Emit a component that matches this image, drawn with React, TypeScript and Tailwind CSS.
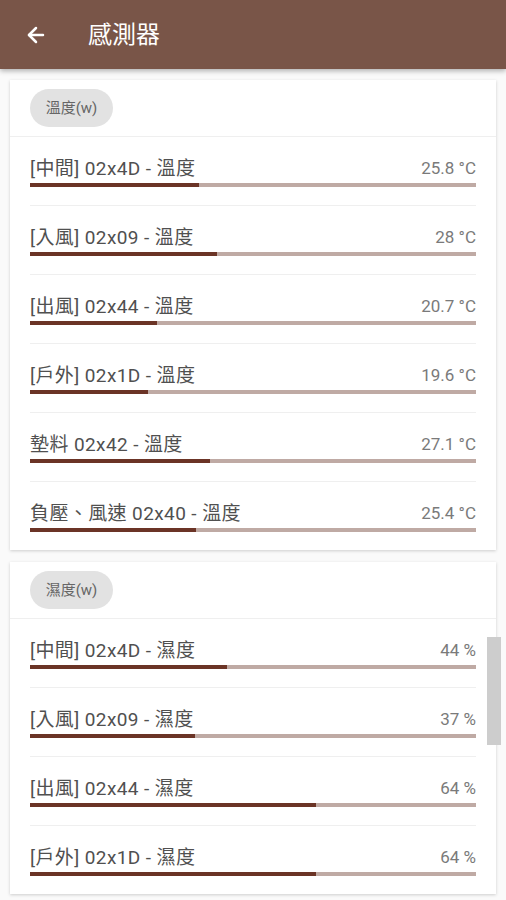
import { ArrowLeft } from "lucide-react";

interface Reading {
  name: string;
  value: string;
  fill: number; // px of the 447px track
}

const temps: Reading[] = [
  { name: "[中間] 02x4D - 溫度", value: "25.8 °C", fill: 169 },
  { name: "[入風] 02x09 - 溫度", value: "28 °C", fill: 187 },
  { name: "[出風] 02x44 - 溫度", value: "20.7 °C", fill: 127 },
  { name: "[戶外] 02x1D - 溫度", value: "19.6 °C", fill: 118 },
  { name: "墊料 02x42 - 溫度", value: "27.1 °C", fill: 180 },
  { name: "負壓、風速 02x40 - 溫度", value: "25.4 °C", fill: 166 },
];

const hums: Reading[] = [
  { name: "[中間] 02x4D - 濕度", value: "44 %", fill: 197 },
  { name: "[入風] 02x09 - 濕度", value: "37 %", fill: 165 },
  { name: "[出風] 02x44 - 濕度", value: "64 %", fill: 286 },
  { name: "[戶外] 02x1D - 濕度", value: "64 %", fill: 286 },
];

function Row({ item }: { item: Reading }) {
  return (
    <div className="mx-[20px] h-[69px] border-t border-[#efefef] pt-[21px]">
      <div className="flex h-[22px] items-center justify-between">
        <span className="text-[19px] tracking-[0.4px] text-[#505050]">{item.name}</span>
        <span className="text-[17px] text-[#7a7a7a]">{item.value}</span>
      </div>
      <div className="mt-[3px] h-[4px] w-full bg-[#bfaaa4]">
        <div className="h-full bg-[#6b3426]" style={{ width: item.fill }} />
      </div>
    </div>
  );
}

function Card({ label, items }: { label: string; items: Reading[] }) {
  return (
    <div className="mx-[10px] bg-white shadow-[0_1px_3px_rgba(0,0,0,0.18)]">
      <div className="border-b border-[#efefef] px-[20px] py-[9px]">
        <span className="inline-flex h-[38px] w-[83px] items-center justify-center rounded-full bg-[#e2e2e2] text-[15px] text-[#666]">
          {label}
        </span>
      </div>
      <div className="-mt-px">
        {items.map((it) => (
          <Row key={it.name} item={it} />
        ))}
      </div>
    </div>
  );
}

export default function App() {
  return (
    <div
      className="relative h-[900px] overflow-hidden bg-[#fafafa]"
      style={{ fontFamily: "Roboto, 'Noto Sans CJK TC', sans-serif" }}
    >
      <header className="relative z-10 flex h-[69px] items-center bg-[#795548] shadow-[0_2px_5px_rgba(0,0,0,0.3)]">
        <ArrowLeft className="ml-[24px] h-[24px] w-[24px] text-white" strokeWidth={2.5} />
        <h1 className="ml-[40px] text-[24px] text-white">感測器</h1>
      </header>
      <div className="flex flex-col gap-[12px] pt-[11px]">
        <Card label="溫度(w)" items={temps} />
        <Card label="濕度(w)" items={hums} />
      </div>
      <div className="absolute top-[637px] left-[487px] h-[108px] w-[14px] bg-[#cdcdcd]" />
    </div>
  );
}
